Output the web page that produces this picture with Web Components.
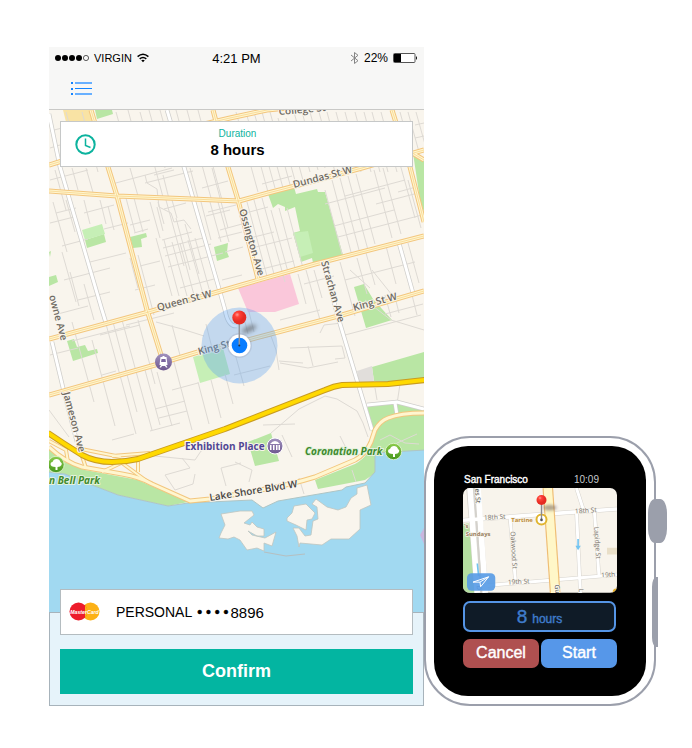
<!DOCTYPE html>
<html lang="en">
<head>
<meta charset="utf-8">
<meta name="viewport" content="width=device-width, initial-scale=1">
<title>Parking session</title>
<style>
  body { margin: 0; background: #fff; font-family: "Liberation Sans", Arial, sans-serif; color: #000; }
</style>
</head>
<body>
<parking-showcase>
  <phone-screen>
    <phone-header slot="header" carrier="VIRGIN" time="4:21 PM" battery="22%"></phone-header>
    <city-map slot="map"></city-map>
    <duration-card slot="duration" label="Duration">8 hours</duration-card>
    <payment-card slot="actions" account="PERSONAL" digits="8896"></payment-card>
    <confirm-button slot="actions">Confirm</confirm-button>
  </phone-screen>
  <watch-device>
    <watch-status place="San Francisco" time="10:09"></watch-status>
    <watch-map></watch-map>
    <watch-duration amount="8" unit="hours"></watch-duration>
    <watch-actions></watch-actions>
  </watch-device>
</parking-showcase>

<script>
const define = (name, template) => customElements.define(name, class extends HTMLElement {
  constructor() {
    super();
    const root = this.attachShadow({ mode: "open" });
    root.innerHTML = typeof template === "function" ? template(this) : template;
  }
});
const attr = (el, name) => el.getAttribute(name) || "";

define("parking-showcase", `
<style>
  :host { display: grid; grid-template-columns: 375fr 243fr; align-items: end; padding: 47px 25px 42px 49px; }
</style><slot></slot>`);

define("phone-screen", `
<style>
  :host { display: block; min-width: 0; }
  .stage { display: grid; grid-template: 1fr / 1fr; }
  .map, .over { grid-area: 1 / 1; min-width: 0; }
  .over { padding: 11px 11px 0; align-self: start; z-index: 1; }
  .panel { display: flex; flex-direction: column; gap: 14px; padding: 0 10px 11px 10px; background: #e6f3fa; border: 1px solid #a7b3bb; }
  slot[name=actions] { display: contents; }
  .panel ::slotted(payment-card) { margin-top: -24px; position: relative; }
</style>
<slot name="header"></slot>
<div class="stage"><div class="map"><slot name="map"></slot></div><div class="over"><slot name="duration"></slot></div></div>
<div class="panel"><slot name="actions"></slot></div>`);

define("phone-header", el => `
<style>
  :host { display: block; background: #f7f7f6; border-bottom: 1px solid #c9c9c7; }
  .status { display: grid; grid-template-columns: 1fr auto 1fr; align-items: center; height: 22px; padding: 0 6px 0 6px; }
  .left, .right { display: flex; align-items: center; gap: 5px; }
  .right { justify-content: flex-end; }
  .left { font-size: 11px; gap: 5px; } .time { font-size: 13px; } .right { font-size: 12px; }
  svg { display: block; }
  nav { height: 40px; display: flex; align-items: center; padding-left: 20px; }
  button { background: none; border: 0; padding: 2px; margin: 0; }
</style>
<div class="status">
  <div class="left">
    <svg width="34" height="8" viewBox="0 0 34 8"><g><circle cx="3" cy="4" r="3"/><circle cx="10" cy="4" r="3"/><circle cx="17" cy="4" r="3"/><circle cx="24" cy="4" r="3"/><circle cx="31" cy="4" r="2.6" fill="none" stroke="#333" stroke-width=".8"/></g></svg>
    <span>${attr(el, "carrier")}</span>
    <svg width="12" height="10" viewBox="0 0 12 10" fill="none" stroke="#000" stroke-width="1.5"><path d="M.6 3.6Q6-1.2 11.4 3.6M2.7 5.9Q6 3 9.3 5.9"/><path d="M4.2 7.3Q6 6 7.8 7.3L6 9.3Z" fill="#000" stroke="none"/></svg>
  </div>
  <span class="time">${attr(el, "time")}</span>
  <div class="right">
    <svg width="9" height="12" viewBox="0 0 9 12" fill="none" stroke="#858585" stroke-width="1"><path d="M1 3 8 8.7 4.5 11.5V.5L8 3.3 1 9"/></svg>
    <span>${attr(el, "battery")}</span>
    <svg width="25" height="10" viewBox="0 0 25 10"><rect x=".5" y=".5" width="21.500" height="9" rx="1" fill="#fff" stroke="#555"/><path d="M1 1h7v8H1z"/><path d="M23 3q2 2 0 4z"/></svg>
  </div>
</div>
<nav><button aria-label="Menu"><svg width="21" height="14" viewBox="0 0 21 14"><path fill="#1384ff" d="M0 0h2v2H0zM0 6h2v2H0zM0 11h2v2H0zM4 6h17v1H4z"/><path fill="#68b0ff" d="M4 0h17v2H4zM4 11h17v2H4z"/></svg></button></nav>`);

define("duration-card", el => `
<style>
  :host { display: block; }
  button { display: grid; grid-template-columns: 22px 1fr 20px; align-items: center; width: 100%; height: 46px; padding: 0 14px; border: 1px solid #c6c8c8; background: #fff; font: inherit; color: #000; }
  svg { display: block; }
  .text { display: flex; flex-direction: column; align-items: center; }
  small { font-size: 10px; line-height: 14px; color: #0cb39e; }
  b { font-size: 15px; line-height: 18px; padding-bottom: 3px; }
</style>
<button><svg width="21" height="21" viewBox="0 0 21 21" fill="none" stroke="#0cb39e"><circle cx="10.500" cy="10.500" r="9.200" stroke-width="2"/><path d="M10.500 4.500V11.500L15.500 13.500" stroke-width="1.500"/></svg>
<span class="text"><small>${attr(el, "label")}</small><b><slot></slot></b></span></button>`);

define("payment-card", el => `
<style>
  :host { display: block; }
  button { display: flex; align-items: center; gap: 16px; width: 100%; height: 46px; padding: 0 9px 0 8px; border: 1px solid #b4bcc0; background: #fff; font: inherit; font-size: 14px; color: #000; }
  svg { display: block; }
  .number { display: flex; gap: 2px; align-items: center; }
  .dots { padding-left: 3px; -webkit-text-stroke: .5px #000; }
  .digits { font-size: 15px; }
</style>
<button>
  <svg width="31" height="20" viewBox="0 0 31 20" role="img" aria-label="MasterCard logo"><circle cx="21.500" cy="9.500" r="9" fill="#fcb116"/><circle cx="9.500" cy="9.500" r="9" fill="#ed1c2b"/><path d="M16 3.200A9 9 0 0 1 16 15.800" fill="#fcb116"/>
  <text x="15.500" y="11.500" text-anchor="middle" font-size="5.200" font-weight="bold" font-style="italic" fill="#fff">MasterCard</text></svg>
  <span class="number"><span>${attr(el, "account")}</span><span class="dots">• • • •</span><span class="digits">${attr(el, "digits")}</span></span>
</button>`);

define("confirm-button", `
<style>
  :host { display: block; }
  button { width: 100%; height: 45px; border: 0; padding: 0; background: #03b5a1; color: #fff; font: inherit; font-size: 18px; font-weight: bold; }
</style><button><slot></slot></button>`);

/* Street segments as [x, y, length]: "down" runs with the avenues, "across" with the cross streets. */
const down = [
  [55,170,40],[66,112,52],[72,168,22],[82,112,60],[86,168,28],[104,122,45],[116,112,54],[128,110,56],[130,168,28],[140,112,85],[149,110,58],[158,202,22],[160,110,55],[163,175,24],[172,200,18],[176,110,56],[187,110,88],[190,168,30],[198,110,90],[212,168,60],[226,125,40],
  [236,112,80],[246,112,80],[254,112,76],[262,112,76],[270,112,76],[278,118,70],[286,118,66],[294,112,60],[302,112,58],[310,112,56],[319,112,60],[327,112,60],[336,112,60],[345,112,60],[355,112,60],[364,112,60],[372,112,60],[381,112,60],[400,112,44],[408,112,40],[416,112,36],
  [53,202,50],[66,200,32],[84,200,24],[100,200,24],[108,206,24],[126,198,34],[134,198,34],[150,202,36],[157,207,24],[166,200,66],[176,218,52],[185,224,50],
  [130,258,30],[138,255,60],[156,238,58],[164,240,56],[172,242,54],[180,243,52],[188,240,54],[195,238,54],[201,202,38],[210,202,40],[218,202,40],[247,202,78],[254,200,74],[262,198,84],[271,210,62],[279,208,60],[287,208,60],[298,274,30],[306,270,50],[314,270,28],
  [325,190,64],[332,180,72],[340,178,72],[348,176,74],[356,174,70],[374,170,68],[383,168,66],[400,164,54],[408,180,48],
  [62,252,50],[70,272,34],[84,284,36],[113,322,90],[72,322,80],[92,340,86],[106,324,110],[122,320,110],[138,320,64],[145,370,55],[157,372,54],[174,362,68],[198,382,42],[211,380,38],[225,374,30],[234,350,36],
  [172,325,34],[206,324,24],[328,268,34],[340,262,54],[357,258,36],[366,253,32],[386,246,38],[408,243,40],[243,314,20],[249,312,20],[308,346,20],[385,295,22],[394,293,20],[412,295,20]
];
const across = [
  [50,180,38],[56,213,20],[50,223,24],[62,246,26],[84,213,30],[104,229,24],[90,262,36],[64,280,46],[54,315,34],[78,300,32],
  [112,184,60],[145,183,48],[154,175,20],[202,188,26],[208,212,28],[206,216,24],[218,238,24],[220,230,22],[130,225,20],[134,233,14],[164,209,22],[162,240,30],[163,248,40],[165,256,46],[168,267,55],[180,288,34],[140,266,20],[135,290,20],[222,280,20],[225,252,18],
  [242,214,26],[250,238,24],[252,248,40],[258,270,36],[262,184,30],[325,204,60],[334,226,60],[338,237,84],[345,196,60],[376,204,42],[398,192,18],
  [50,131,12],[50,148,10],[415,125,9],[415,138,9],[304,284,30],[345,280,70],[385,314,38],[345,335,76],[280,320,40],
  [50,355,28],[72,341,58],[100,335,40],[126,325,48],[102,375,14],[172,390,26],[155,409,30],[159,418,28],[150,431,30],[112,440,22],[234,375,36]
];
const r = Math.round;
const streets = down.map(([x, y, n]) => `M${x} ${y}l${r(n * .27)} ${n}`).join("") +
  across.map(([x, y, n]) => `M${x} ${y}l${n} ${-r(n * .26)}`).join("");

define("city-map", `
<style>
  :host { display: block; }
  svg { display: block; width: 100%; height: auto; }
  text { font-family: "Open Sans", "Noto Sans", sans-serif; font-weight: 600; font-size: 10px; fill: #6d6961; stroke: #f9f5ed; stroke-width: 2px; paint-order: stroke; stroke-linejoin: round; }
  .poi { font-size: 10px; font-weight: 700; fill: #514794; }
  .park { font-size: 10px; font-style: italic; font-weight: 700; fill: #3f8a2e; stroke: #e4f2dc; }
</style>
<svg viewBox="49 110 375 502" role="img" aria-label="Map of the area">
  <defs>
    <radialGradient id="red" cx=".35" cy=".3"><stop offset="0" stop-color="#ff9d95"/><stop offset=".35" stop-color="#ff4238"/><stop offset="1" stop-color="#e52b22"/></radialGradient>
    <linearGradient id="tree" x2="0" y2="1"><stop offset="0" stop-color="#8dcc4c"/><stop offset="1" stop-color="#45961c"/></linearGradient>
    <linearGradient id="purple" x2="0" y2="1"><stop offset="0" stop-color="#a192be"/><stop offset="1" stop-color="#6d568f"/></linearGradient>
    <filter id="soft" x="-50%" y="-100%" width="200%" height="300%"><feGaussianBlur stdDeviation="2"/></filter>
    <path id="roads" d="M91 110 108 167 117 196 147 310 161 355M49 191 117 196 192 199 239 201 268 193 295 186 362 168 424 150M49 339 145 313 245 284 315 264 424 236M49 395 155 365 198 352 248 340 342 315 424 291M213 110 228 167 238 200 258 279M392 110 410 167 424 222M200 125 230 118 267 110 330 104M49 165 62 161M409 151 424 160"/>
    <path id="shore" d="M49 447Q65 462 82 467L122 474Q140 477 152 484L190 501 210 499 255 491Q290 485 315 477L355 460Q366 454 371 442L375 430Q380 421 388 418 400 413 424 413"/>
    <path id="highway" d="M48 433Q64 444 82 455 95 462 112 462 125 462 138 459L225 429 325 390Q334 386 342 385L388 384 425 380"/>
    <path id="ramps" d="M76 448 121 457M82 456 86 468M122 463 148 482M138 460 138 472M102 472 121 463M49 441 66 450 68 462M112 456 150 453"/>
    <path id="white" d="M49 114 60 167 102 310 106 323M167 110 184 167 220 292 225 310Q228 327 237 326M52 342 64 392 77 442M325 268 338 317 372 430M399 243 413 293M367 405 397 402 424 409M395 403 397 415"/>
  </defs>
  <path fill="#f9f5ed" d="M49 110h375v502H49z"/>
  <path fill="#f9e3a4" d="M63 110h29l3 12H66z"/>
  <g fill="#b9e6a4">
    <path d="M95 110h17l1 4-16 5zM268 194 294 187 296 194 317 189 318 192 325 192 343 255 313 263 312 258 301 262 293 233 300 231 295 207 285 211V207L278 204 273 208ZM413 153 424 161V212L420 200ZM85 240 104 234 106 242 87 248ZM130 237 146 233 147 237 141 239 142 247 133 248ZM214 247 228 243 227 252 229 257 217 261ZM49 277 56 275 58 282 49 286ZM49 252 51 251 50 257ZM67 341 74 339 77 347 85 345 88 351 97 349 98 353 73 361ZM354 287 364 284 373 299 392 320 366 328ZM372 367 424 352V378L388 382 374 381ZM367 405 402 403 424 410V451L377 460V472L365 480 318 489 315 480 355 464Q370 456 373 438ZM248 442 271 433 279 461 255 466ZM49 448 65 462 85 470 138 480 188 502 168 506 118 495 92 485 65 474 49 472Z"/>
    <path fill="#c6efb6" d="M82 230 102 224 105 234 85 240ZM293 233 308 231 313 253 300 257ZM193 357 223 348 230 374 200 383Z"/>
  </g>
  <path fill="#fac7da" d="M238 288 290 274 299 304 275 312H248Z"/>
  <path fill="#e1dedb" d="M357 371 372 366 374 382 359 383Z"/>
  <g fill="none" stroke="#dedad4">
    <path d="${streets}"/>
    <path d="M145 175l2 8 10 6 2 18 12 6 3 9 10-2 7 9M156 322l26 7 22 7M290 348l52-2 3 12-10 1M280 363l28 5 30-6M320 333l4-8 18-2M262 338l9-2 5 14 3 20M279 361l24 2M325 396l12 3 20 12 6 12 5 14M49 410l20 27M271 433l28-24 26-13M263 425l32-1M282 435l10 22M340 436l7 14M377 400l-2-12M397 404l3-20M145 455l50 5 6-9 14-7M165 475l25-7-8-10M165 475l10 15 18-6 2-10M221 468l20-5M221 468l5 18M235 462l17 8-3 12M365 300l26 20 33 10M372 270l20 25M350 270l20 18M299 478l5 16M380 440l10-5 15 8 14 1M392 449l5-6 20-9M352 470l4 12"/>
  </g>
  <path fill="#a1d9f1" stroke="#afc5c5" d="M48 472 65 474 92 485 118 495 168 506 188 503 252 500 263 508 278 501 342 490 346 487 365 483 375 472V453L425 450V613H48Z"/>
  <g fill="#f9f5ed" stroke="#bfc5bf" stroke-width=".8">
    <path d="M221 514 240 511 252 511 254 515 244 523 250 525 252 522 257 527 264 529 264 536 257 536 248 531 252 535 265 538 276 532 272 546 264 543 264 551 257 548 247 550 240 540 234 537 228 539 219 538 221 533 225 525Z"/>
    <path d="M294 506 306 504 315 513 312 519 307 520 306 530 296 525 287 521 287 518 292 513Z"/>
    <path d="M316 499 327 507 338 510 346 507 351 498 357 494V488L367 485 371 505 360 510V529L349 539H331L322 545 300 543 299 547 297 536 293 528 299 528 305 536 311 535 313 521 318 519 317 507 312 504Z"/>
  </g>
  <path d="M264 552 286 556 305 554" fill="none" stroke="#b6bfc0"/>
  <path fill="#c9b6df" d="M420 535 424 528V544Z"/>
  <g fill="none" stroke-linejoin="round">
    <use href="#white" stroke="#cfcecb" stroke-width="4.500"/>
    <use href="#white" stroke="#fff" stroke-width="3"/>
    <g stroke="#f3c67d"><use href="#ramps" stroke-width="4"/><use href="#shore" stroke-width="5"/><use href="#roads" stroke-width="5"/></g>
    <g stroke="#fff6d0"><use href="#ramps" stroke-width="2"/><use href="#shore" stroke-width="3"/><use href="#roads" stroke-width="3"/></g>
    <use href="#roads" stroke="#f6d184" stroke-width=".700"/>
    <use href="#highway" stroke="#c89b21" stroke-width="6"/><use href="#highway" stroke="#ffd900" stroke-width="4"/>
  </g>
  <text transform="translate(279 115) rotate(-5)">College St</text>
  <text transform="translate(294 188) rotate(-15)">Dundas St W</text>
  <text transform="translate(158 311) rotate(-15)">Queen St W</text>
  <text transform="translate(354 311) rotate(-15)">King St W</text>
  <text transform="translate(199 355) rotate(-15)">King St W</text>
  <text transform="translate(239 210) rotate(74)">Ossington Ave</text>
  <text transform="translate(321 262) rotate(74)">Strachan Ave</text>
  <text transform="translate(63 393) rotate(75)">Jameson Ave</text>
  <text transform="translate(49 296) rotate(75)">owne Ave</text>
  <text transform="translate(210 501) rotate(-9)" style="fill:#46443f">Lake Shore Blvd W</text>
  <text class="poi" x="185" y="450">Exhibition Place</text>
  <text class="park" x="305" y="455">Coronation Park</text>
  <text class="park" x="49" y="484">n Bell Park</text>
  <circle cx="163.500" cy="362" r="8.500" fill="url(#purple)"/>
  <path fill="#fff" d="M160.500 357h2v-1h2v1h2l1 8h-1.500l1.500 2.500h-1.500l-1-1.500h-3l-1 1.500h-1.500l1.500-2.500h-1.500z"/><path fill="#7c66a0" d="M161.500 359h4l.4 3h-4.800z"/>
  <circle cx="275" cy="446" r="8" fill="url(#purple)" stroke="#fff" stroke-width="1"/>
  <path fill="#fff" d="M270 444q5-6 10 0zM270 445h1.500v5H270zM273 445h1.500v5H273zM276 445h1.500v5H276zM278.500 445h1.500v5h-1.500z"/>
  <g id="treepoi"><circle cx="393.500" cy="451.500" r="8.200" fill="url(#tree)" stroke="#e4f5d8" stroke-width=".800"/><path fill="#fff" d="M393 457v-3q-5 0-5-3 0-2 2-2 1-3 4-3 3 0 4 3 2 1 1 3-1 2-4 2v3z"/></g>
  <use href="#treepoi" x="-337.500" y="13"/>
  <circle cx="239.500" cy="345.500" r="38" fill="#5ba2ef" fill-opacity=".34"/>
  <ellipse cx="249" cy="329" rx="8" ry="3" transform="rotate(-25 249 329)" fill="#555" opacity=".6" filter="url(#soft)"/>
  <circle cx="239.500" cy="345.500" r="12.500" fill="#889" opacity=".2"/>
  <circle cx="239.500" cy="345.500" r="11" fill="#fff"/><circle cx="239.500" cy="345.500" r="7.800" fill="#087cff"/>
  <path stroke="#91949a" stroke-width="1.500" d="M239.300 323v22"/><circle cx="239.300" cy="345.500" r="1" fill="#234"/>
  <circle cx="239.300" cy="317.500" r="7" fill="url(#red)"/>
</svg>`);

define("watch-device", `
<style>
  :host { display: block; position: relative; min-width: 0; padding-right: 11px; }
  .case { position: relative; z-index: 1; border: 2px solid #9b9fab; border-radius: 46px; padding: 8px; background: #fff; }
  .screen { display: flex; flex-direction: column; box-sizing: border-box; min-height: 250px; padding: 27px 29px 28px 29px; border-radius: 34px; background: #000; color: #fff; }
  .crown, .side { position: absolute; background: #9b9fab; }
  .crown { z-index: 2; right: 0; top: 63px; width: 19px; height: 44px; border-radius: 7px / 14px; }
  .side { z-index: 2; right: 9px; top: 141px; width: 6px; height: 70px; border-radius: 4px 0 0 4px / 10px 0 0 10px; }
</style>
<div class="case"><div class="screen"><slot></slot></div></div><div class="crown"></div><div class="side"></div>`);

define("watch-status", el => `
<style>
  :host { display: flex; justify-content: space-between; padding: 0 18px 0 1px; font-size: 10px; line-height: 13px; margin-bottom: 2px; }
  .place { -webkit-text-stroke: .4px #fff; } .time { color: #c6cacd; }
</style><span class="place">${attr(el, "place")}</span><span class="time">${attr(el, "time")}</span>`);

define("watch-map", `
<style>
  :host { display: block; border-radius: 7px; overflow: hidden; margin-bottom: 8px; }
  svg { display: block; width: 100%; height: auto; }
  text { font-family: "Open Sans", "Noto Sans", sans-serif; font-size: 20px; fill: #77736c; stroke: #f8f4ec; stroke-width: 4px; paint-order: stroke; }
  .poi { font-weight: 700; font-size: 18px; fill: #bd8a36; }
</style>
<svg viewBox="127 171 463 315" role="img" aria-label="Map around Tartine">
  <defs><radialGradient id="pin" cx=".35" cy=".3"><stop offset="0" stop-color="#ff9d95"/><stop offset=".35" stop-color="#ff4238"/><stop offset="1" stop-color="#e52b22"/></radialGradient><filter id="blur" x="-50%" y="-100%" width="200%" height="300%"><feGaussianBlur stdDeviation="5"/></filter></defs>
  <path fill="#f8f4ec" d="M127 171h463v315H127z"/>
  <path fill="#b4dea0" d="M127 278h26l10 208h-36z"/><path fill="#e9dfc8" d="M560 351h30v20h-30z"/>
  <g fill="none">
    <g stroke="#d6d3cd"><path stroke-width="14" d="M127 268 590 234"/><path stroke-width="12" d="M268 255 285 455M468 171 490 240M468 240 480 486M522 240 536 438M200 464 590 432"/><path stroke-width="42" d="M158 171 182 486"/></g>
    <g stroke="#fff"><path stroke-width="11" d="M127 268 590 234"/><path stroke-width="9" d="M268 255 285 455M468 171 490 240M468 240 480 486M522 240 536 438M200 464 590 432"/><path stroke-width="17" d="M148 171 170 486M172 171 194 486"/></g>
    <path stroke="#d3d1cc" stroke-width="3" d="M160 171 166 258M168 275 180 430"/>
    <path stroke="#efbd74" stroke-width="32" d="M382 171 404 486"/><path stroke="#fff7c8" stroke-width="25" d="M382 171 404 486"/>
    <path stroke="#72c4f0" stroke-width="5" d="M170 398 174 435M473 324v24"/>
  </g>
  <path fill="#72c4f0" d="M465 345h16l-8 13z"/>
  <text transform="translate(190 267) rotate(-3)">18th St</text><text transform="translate(464 248) rotate(-4)">18th St</text>
  <text transform="translate(262 461) rotate(-3)">19th St</text><text transform="translate(543 440) rotate(-4)">19th</text>
  <text transform="translate(270 302) rotate(87)">Oakwood St</text><text transform="translate(521 288) rotate(86)">Lapidge St</text>
  <text transform="translate(163 173) rotate(86)" style="fill:#444">es St</text><text transform="translate(403 462) rotate(86)" style="fill:#444">Gu</text>
  <text transform="translate(475 474) rotate(86)">L</text><text transform="translate(168 464) rotate(86)">D</text>
  <text class="poi" x="272" y="273">Tartine</text><text class="poi" style="fill:#987f62" x="135" y="314">Sundays</text><text class="poi" style="fill:#987f62" x="130" y="292">'s</text>
  <circle cx="363" cy="266" r="15" fill="#fff" stroke="#e1b52f" stroke-width="6"/>
  <ellipse cx="388" cy="230" rx="20" ry="9" fill="#655" opacity=".5" filter="url(#blur)"/>
  <path stroke="#8a8a8f" stroke-width="4" d="M363 215v52"/><circle cx="363" cy="267" r="4" fill="#555"/><circle cx="363" cy="207" r="15" fill="url(#pin)"/>
  <rect x="139" y="427" width="85" height="53" rx="14" fill="#559ae6" fill-opacity=".9"/>
  <path fill="none" stroke="#fff" stroke-width="3" stroke-linejoin="round" d="M157 454 204 438 180 468 178 454Z M178 454 204 438"/>
  <circle cx="588" cy="484" r="11" fill="#e8ae25"/>
</svg>`);

define("watch-duration", el => `
<style>
  :host { display: flex; justify-content: center; align-items: baseline; gap: 5px; box-sizing: border-box; height: 31px; border: 2px solid #5595e5; border-radius: 7px; background: #0f1b27; color: #3f7ccb; margin: 0 1px 7px 0; line-height: 27px; -webkit-text-stroke: .4px #3f7ccb; }
  .amount { font-size: 19px; } .unit { font-size: 12px; }
</style><span class="amount">${attr(el, "amount")}</span><span class="unit">${attr(el, "unit")}</span>`);

define("watch-actions", `
<style>
  :host { display: grid; grid-template-columns: 1fr 1fr; gap: 2px; }
  button { height: 29px; border: 0; border-radius: 7px; padding: 0; color: #fff; font: inherit; font-size: 16px; -webkit-text-stroke: .4px #fff; }
  .cancel { background: #af5050; } .start { background: #5697e9; }
</style><button class="cancel">Cancel</button><button class="start">Start</button>`);
</script>
</body>
</html>
